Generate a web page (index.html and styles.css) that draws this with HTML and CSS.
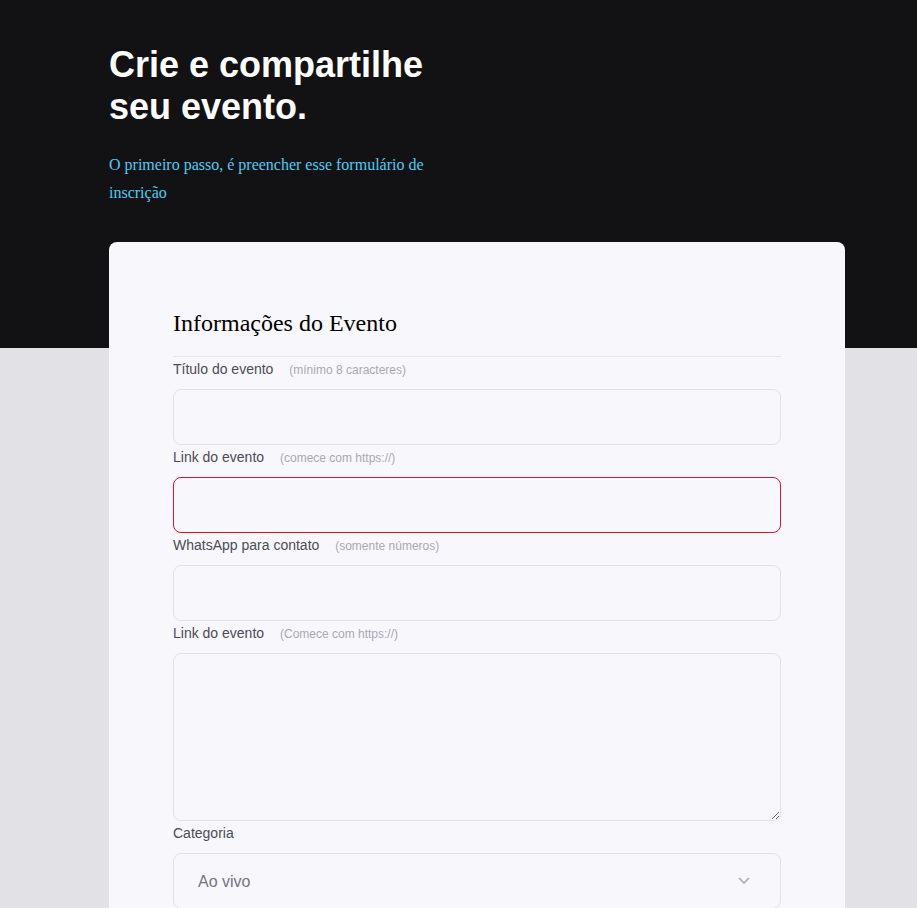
FILE: index.html
```html
<!DOCTYPE html>
<html lang="pt-BR">
<head>
<meta charset="utf-8">
<title>Crie e compartilhe seu evento</title>
<link rel="stylesheet" href="styles.css">
</head>
<body>
<div class="page">
  <header class="intro">
    <h1 class="intro-title">Crie e compartilhe seu evento.</h1>
    <p class="intro-text">O primeiro passo, é preencher esse formulário de inscrição</p>
  </header>
  <main class="card">
    <h2 class="card-title">Informações do Evento</h2>
    <form class="form">
      <label class="label" for="titulo">Título do evento <span class="hint">(mínimo 8 caracteres)</span></label>
      <input class="field" id="titulo" type="text">
      <label class="label" for="link">Link do evento <span class="hint">(comece com https://)</span></label>
      <input class="field field-error" id="link" type="text">
      <label class="label" for="whats">WhatsApp para contato <span class="hint">(somente números)</span></label>
      <input class="field" id="whats" type="text">
      <label class="label" for="desc">Link do evento <span class="hint">(Comece com https://)</span></label>
      <textarea class="field field-area" id="desc"></textarea>
      <label class="label" for="cat">Categoria</label>
      <div class="select-wrap">
        <select class="field field-select" id="cat">
          <option>Ao vivo</option>
          <option>Presencial</option>
        </select>
        <svg class="chevron" width="12" height="8" viewBox="0 0 12 8" aria-hidden="true"><path d="M1.5 1.5 L6 6 L10.5 1.5" fill="none" stroke="#a8a8b3" stroke-width="1.6" stroke-linecap="round" stroke-linejoin="round"/></svg>
      </div>
    </form>
  </main>
</div>
</body>
</html>
```
FILE: styles.css
```css
* { box-sizing: border-box; }
html, body { margin: 0; padding: 0; }
body {
  background: linear-gradient(#121214 0, #121214 348px, #e1e1e6 348px, #e1e1e6 100%);
  min-height: 100vh;
  font-family: "Liberation Sans", Arial, sans-serif;
}
.page {
  padding: 44px 0 0 109px;
}
.intro {
  max-width: 350px;
}
.intro-title {
  margin: 0;
  color: #ffffff;
  font-family: "Liberation Sans", Arial, sans-serif;
  font-weight: 700;
  font-size: 36px;
  line-height: 42px;
}
.intro-text {
  margin: 23px 0 0;
  color: #4ecbf5;
  font-family: "Liberation Serif", "Times New Roman", serif;
  font-size: 16px;
  line-height: 28px;
}
.card {
  margin-top: 35px;
  width: 736px;
  background: #f8f8fc;
  border-radius: 8px;
  padding: 68px 64px 64px;
}
.card-title {
  margin: 0;
  padding-bottom: 19px;
  border-bottom: 1px solid #e6e6f0;
  font-family: "Liberation Serif", "Times New Roman", serif;
  font-weight: 400;
  font-size: 24px;
  color: #000;
}
.form {
  display: flex;
  flex-direction: column;
}
.label {
  display: block;
  margin-top: 4px;
  margin-bottom: 12px;
  font-size: 14px;
  color: #4b4b58;
}
.hint {
  margin-left: 12px;
  font-size: 12px;
  color: #a8a8b3;
}
.field {
  display: block;
  width: 100%;
  height: 56px;
  margin: 0;
  border: 1px solid #e1e1e6;
  border-radius: 8px;
  background: #f8f8fc;
  font-family: "Liberation Sans", Arial, sans-serif;
  font-size: 16px;
  color: #737380;
  padding: 0 24px;
  outline: none;
}
.field-error {
  border-color: #e5102e;
}
.field-area {
  height: 168px;
  padding: 16px 24px;
  resize: vertical;
}
.select-wrap {
  display: grid;
  align-items: center;
}
.select-wrap > * {
  grid-area: 1 / 1;
}
.field-select {
  appearance: none;
  -webkit-appearance: none;
}
.chevron {
  justify-self: end;
  margin-right: 31px;
  pointer-events: none;
}
```
